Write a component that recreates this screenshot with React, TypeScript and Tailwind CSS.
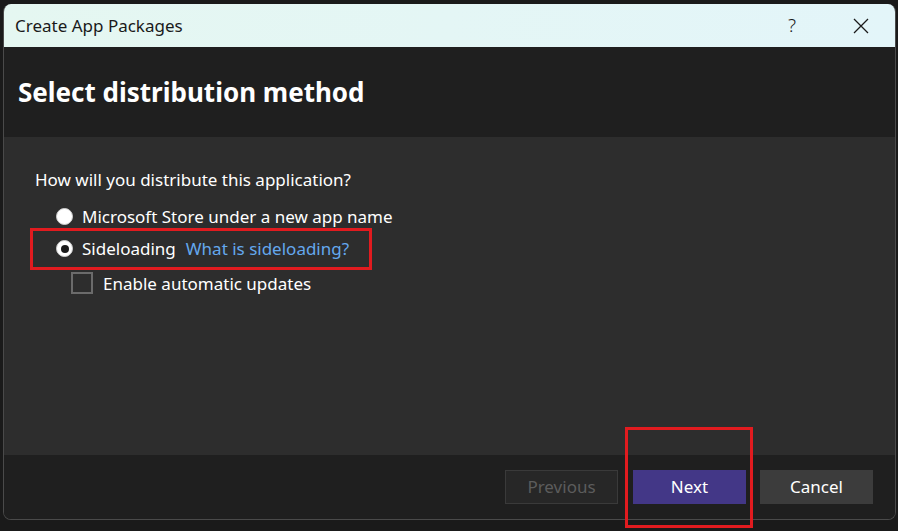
const font = { fontFamily: '"Noto Sans", "Open Sans", sans-serif' };

function Radio({ checked }: { checked?: boolean }) {
    return (
        <span className="flex h-[17px] w-[17px] items-center justify-center rounded-full bg-white border border-[#cfcfcf]">
            {checked && <span className="h-[8px] w-[8px] rounded-full bg-[#1a1a1a]" />}
        </span>
    );
}

export default function App() {
    return (
        <div className="relative h-[531px] w-[898px] overflow-hidden bg-[#1a1a1a] pt-[4px] pl-[3px]" style={font}>
            <div className="flex h-[516px] w-[893px] flex-col overflow-hidden rounded-t-[8px] rounded-b-[8px] border border-t-0 border-[#4a4a4a]">
                {/* title bar */}
                <div className="flex h-[43px] shrink-0 items-center bg-gradient-to-r from-[#e5f7f1] to-[#e3f5f9] pl-[11px] pr-[26px] text-[17px] text-[#1a1a1a]">
                    <span className="flex-1">Create App Packages</span>
                    <span className="mr-[57px] text-[19px] font-light">?</span>
                    <svg width="16" height="16" viewBox="0 0 16 16" fill="none" stroke="#1a1a1a" strokeWidth="1.3">
                        <path d="M1 1L15 15M15 1L1 15" />
                    </svg>
                </div>

                {/* header */}
                <div className="flex h-[90px] shrink-0 items-center bg-[#1f1f1f] pl-[14px]">
                    <h1 className="text-[26px] font-bold text-white">Select distribution method</h1>
                </div>

                {/* body */}
                <div className="flex flex-1 flex-col bg-[#2d2d2d] pl-[31px] pt-[30px] text-[17px] text-white">
                    <div>How will you distribute this application?</div>
                    <div className="mt-[11px] flex items-center gap-[9px] pl-[21px]">
                        <Radio />
                        <span>Microsoft Store under a new app name</span>
                    </div>
                    <div className="mt-[7px] flex items-center gap-[9px] pl-[21px]">
                        <Radio checked />
                        <span>Sideloading</span>
                        <span className="ml-[1px] text-[#64a8ee]">What is sideloading?</span>
                    </div>
                    <div className="mt-[9px] flex items-center gap-[10px] pl-[36px]">
                        <span className="h-[22px] w-[22px] border-[2px] border-[#6b6b6b]" />
                        <span>Enable automatic updates</span>
                    </div>
                </div>

                {/* footer */}
                <div className="flex h-[64px] shrink-0 items-center justify-end bg-[#1f1f1f] pr-[22px] text-[17px]">
                    <button className="h-[34px] w-[113px] border border-[#3a3a3a] bg-[#272727] text-[#5c5c5c]">Previous</button>
                    <button className="ml-[15px] h-[34px] w-[113px] bg-[#433787] text-white">Next</button>
                    <button className="ml-[14px] h-[34px] w-[113px] bg-[#3c3c3c] text-white">Cancel</button>
                </div>
            </div>

            {/* highlight overlays */}
            <div className="absolute left-[30px] top-[228px] h-[42px] w-[342px] border-[3px] border-[#e11b1f]" />
            <div className="absolute left-[625px] top-[427px] h-[101px] w-[128px] border-[3px] border-[#e11b1f]" />
        </div>
    );
}
